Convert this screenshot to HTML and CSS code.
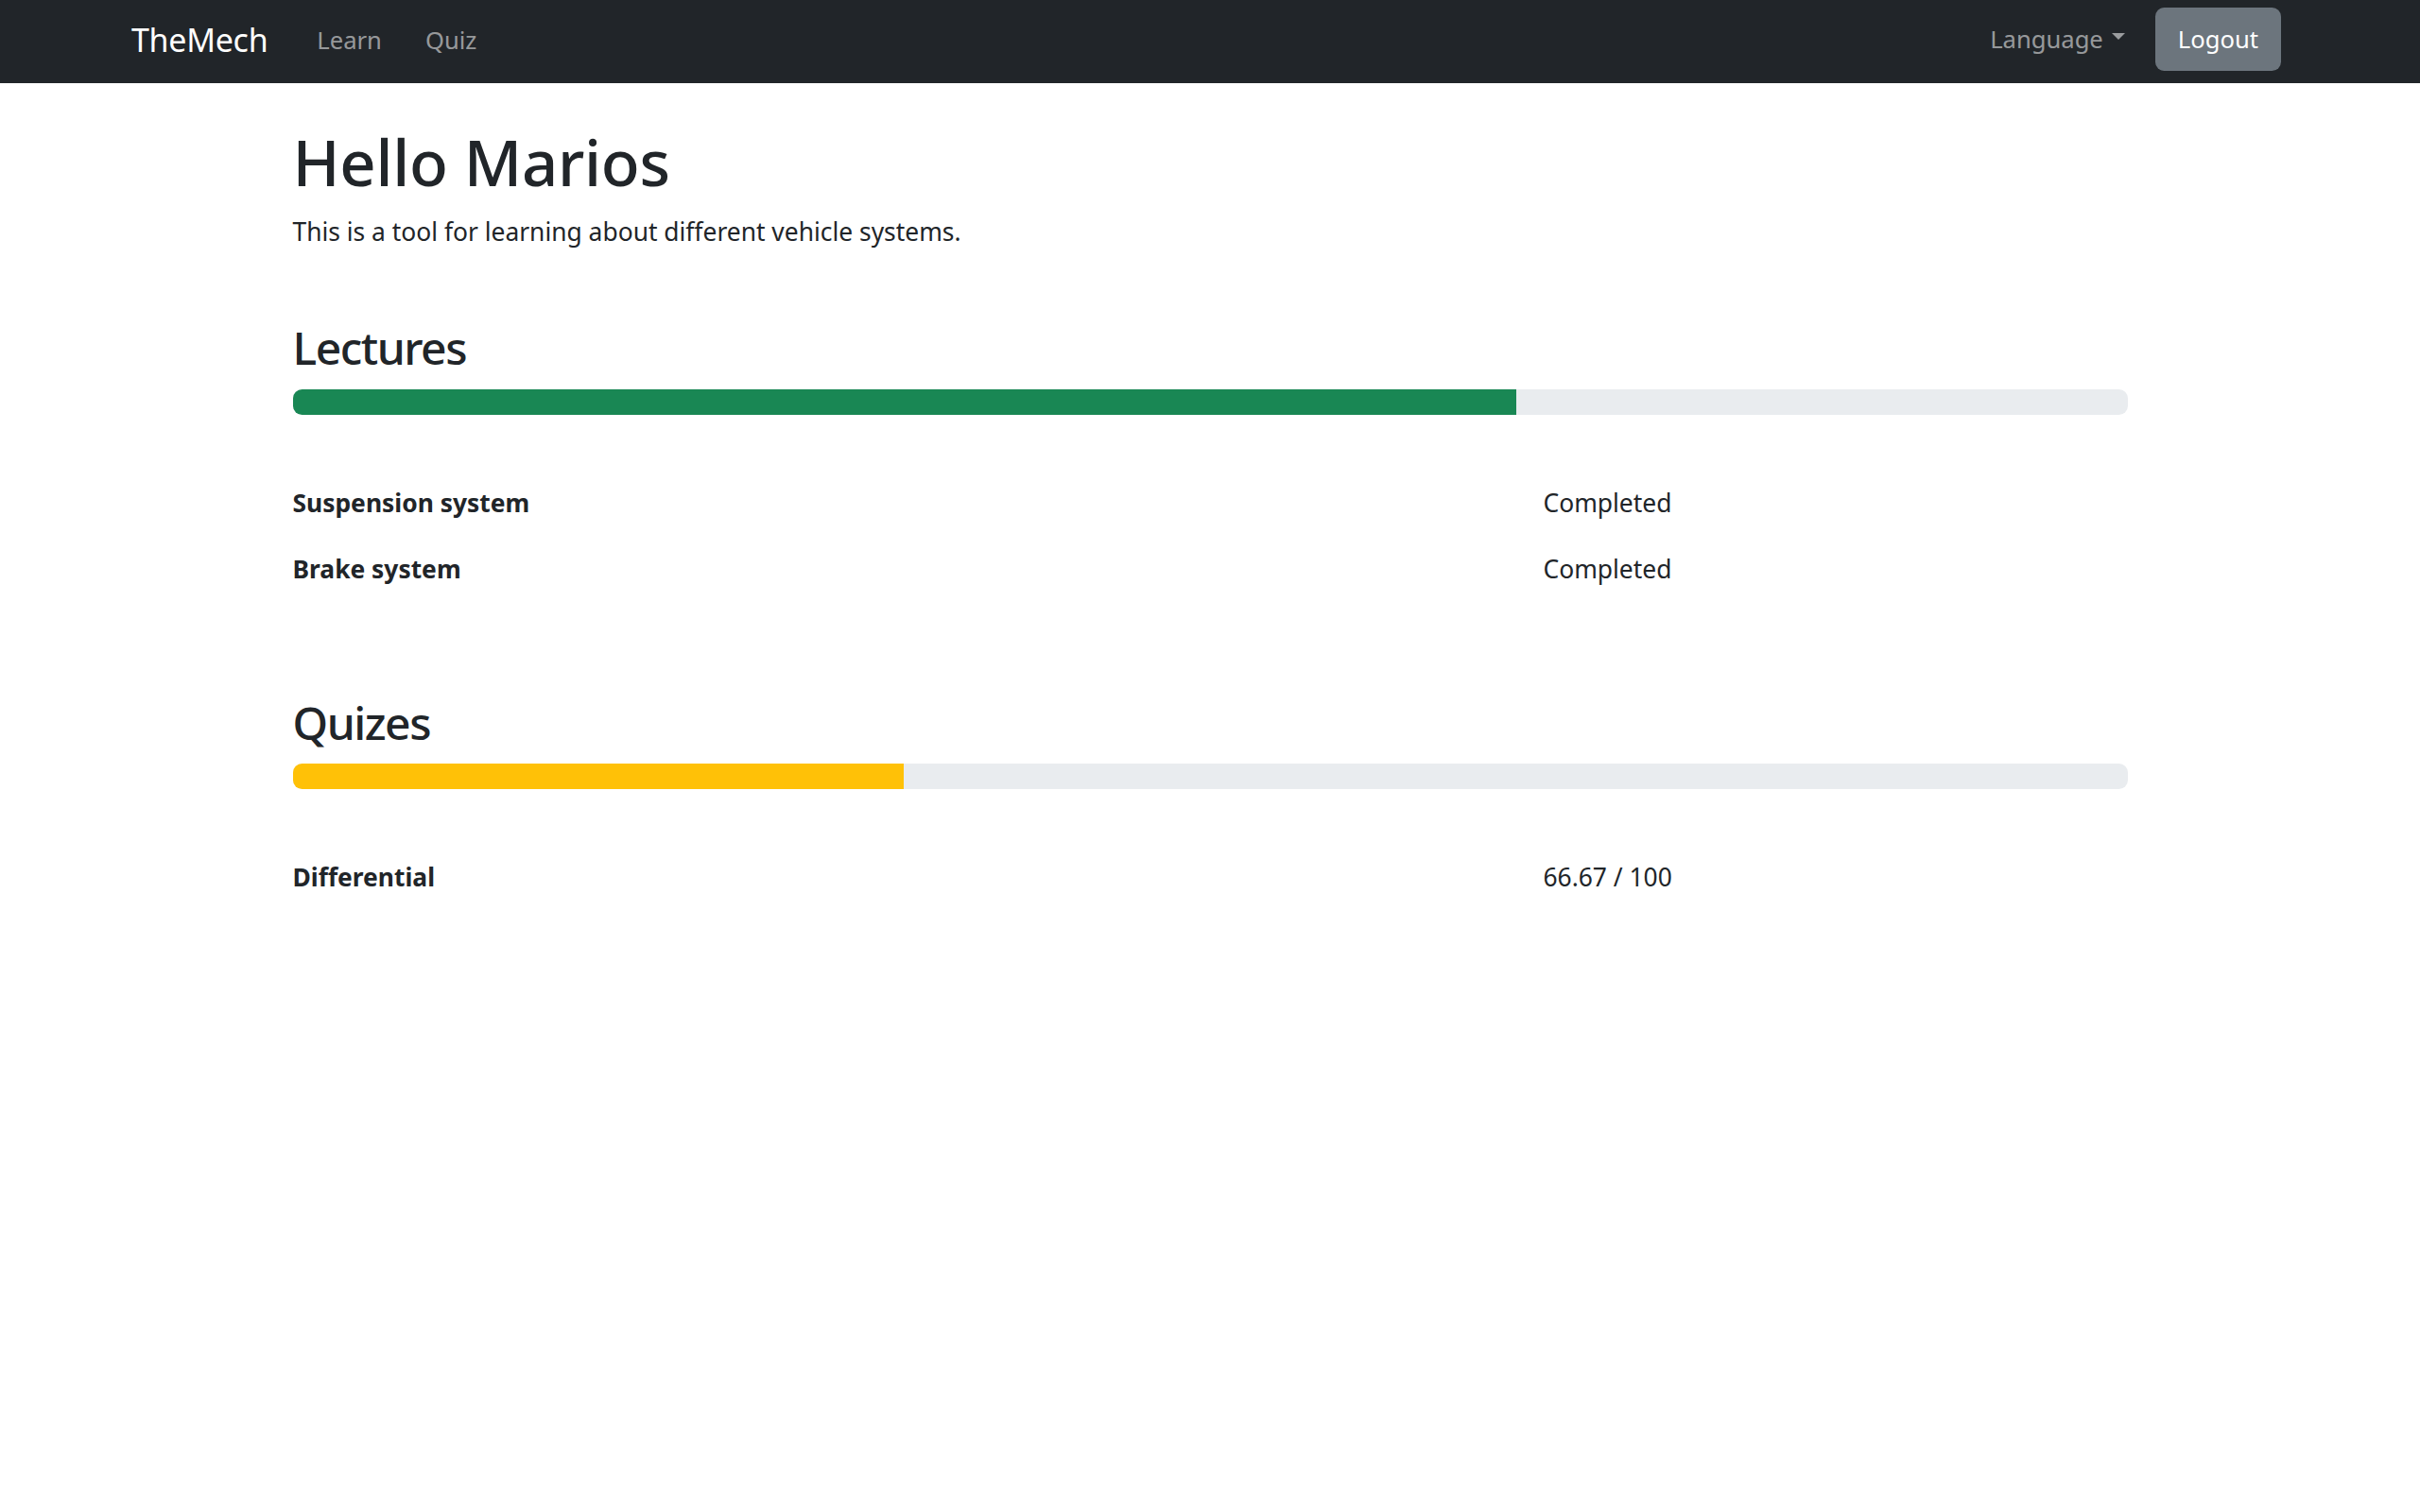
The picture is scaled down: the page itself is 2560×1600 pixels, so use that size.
FILE: index.html
```html
<!DOCTYPE html>
<html lang="en">
<head>
<meta charset="utf-8">
<title>TheMech</title>
<link rel="stylesheet" href="styles.css">
</head>
<body>
<nav class="navbar">
  <a class="brand" href="#">TheMech</a>
  <ul class="nav-links">
    <li><a class="nav-link" href="#">Learn</a></li>
    <li><a class="nav-link" href="#">Quiz</a></li>
  </ul>
  <div class="nav-right">
    <a class="nav-link dropdown" href="#">Language<span class="caret"></span></a>
    <button class="btn-logout">Logout</button>
  </div>
</nav>
<main class="container">
  <h1 class="title">Hello Marios</h1>
  <p class="lead">This is a tool for learning about different vehicle systems.</p>

  <section class="section">
    <h2 class="section-title">Lectures</h2>
    <div class="progress"><div class="progress-bar green" style="width: 66.67%"></div></div>
    <div class="rows">
      <div class="row"><div class="col-name">Suspension system</div><div class="col-value">Completed</div></div>
      <div class="row"><div class="col-name">Brake system</div><div class="col-value">Completed</div></div>
    </div>
  </section>

  <section class="section quizes">
    <h2 class="section-title">Quizes</h2>
    <div class="progress"><div class="progress-bar yellow" style="width: 33.33%"></div></div>
    <div class="rows">
      <div class="row"><div class="col-name">Differential</div><div class="col-value">66.67 / 100</div></div>
    </div>
  </section>
</main>
</body>
</html>
```
FILE: styles.css
```css
* { box-sizing: border-box; }
html, body { margin: 0; padding: 0; }
body {
  font-family: "Noto Sans", "Open Sans", sans-serif;
  color: #212529;
  background: #fff;
  font-size: 26.4px;
}
a { text-decoration: none; }

.navbar {
  height: 88px;
  background: #212529;
  display: flex;
  align-items: center;
  padding: 8px 147px 13px 139px;
}
.brand {
  color: #fff;
  font-size: 34px;
  margin-right: 29px;
  letter-spacing: -0.3px;
}
.nav-links {
  display: flex;
  list-style: none;
  margin: 0;
  padding: 0;
}
.nav-link {
  color: rgba(255,255,255,0.55);
  font-size: 25.6px;
  padding: 0 23px;
  display: inline-flex;
  align-items: center;
}
.nav-right {
  margin-left: auto;
  display: flex;
  align-items: center;
  gap: 32px;
}
.nav-right .nav-link { padding: 0; }
.caret {
  display: inline-block;
  margin-left: 9px;
  width: 0; height: 0;
  border-left: 7.5px solid transparent;
  border-right: 7.5px solid transparent;
  border-top: 7px solid rgba(255,255,255,0.55);
  position: relative;
  top: -3px;
}
.btn-logout {
  font-family: inherit;
  font-size: 25.6px;
  color: #fff;
  background: #6c757d;
  border: none;
  border-radius: 9.6px;
  height: 67px;
  padding: 0 24px;
}

.container {
  max-width: 1941px;
  margin: 0 auto;
}
.title {
  font-size: 67px;
  font-weight: 500;
  margin: 43px 0 0;
  line-height: 1.2;
  letter-spacing: -0.3px;
}
.lead {
  margin: 15px 0 0;
  line-height: 1.5;
}
.section-title {
  font-size: 48px;
  font-weight: 500;
  margin: 0 0 15px;
  line-height: 1.2;
  letter-spacing: -1.5px;
}
.section { margin-top: 73px; }
.quizes { margin-top: 99px; }
.progress {
  height: 27px;
  background: #e9ecef;
  border-radius: 9.6px;
  overflow: hidden;
  display: flex;
}
.progress-bar.green { background: #198754; }
.progress-bar.yellow { background: #ffc107; }
.rows { margin-top: 58px; }
.row {
  display: grid;
  grid-template-columns: 1323px 1fr;
  height: 70px;
  align-items: center;
}
.col-name { font-weight: 700; }
```
